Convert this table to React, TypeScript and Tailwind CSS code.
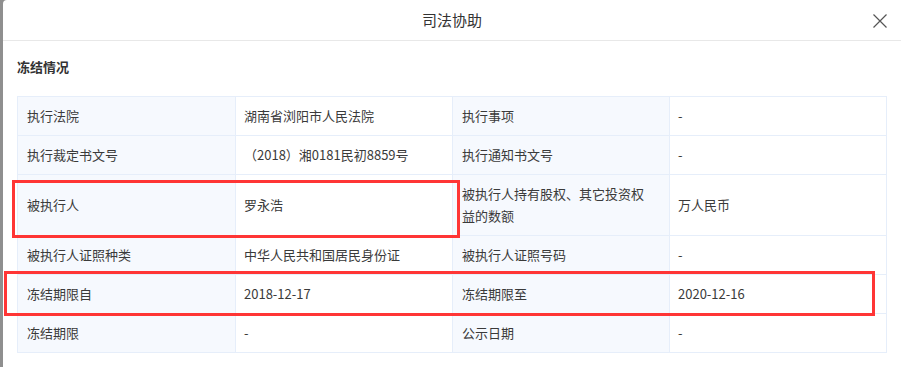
type Cell = { label: string; value: string };
type Row = [Cell, Cell];

const rows: Row[] = [
  [
    { label: '执行法院', value: '湖南省浏阳市人民法院' },
    { label: '执行事项', value: '-' },
  ],
  [
    { label: '执行裁定书文号', value: '（2018）湘0181民初8859号' },
    { label: '执行通知书文号', value: '-' },
  ],
  [
    { label: '被执行人', value: '罗永浩' },
    { label: '被执行人持有股权、其它投资权益的数额', value: '万人民币' },
  ],
  [
    { label: '被执行人证照种类', value: '中华人民共和国居民身份证' },
    { label: '被执行人证照号码', value: '-' },
  ],
  [
    { label: '冻结期限自', value: '2018-12-17' },
    { label: '冻结期限至', value: '2020-12-16' },
  ],
  [
    { label: '冻结期限', value: '-' },
    { label: '公示日期', value: '-' },
  ],
];

const CloseIcon = () => (
  <svg className="absolute left-[870px] top-[14px]" width="14" height="14" viewBox="0 0 14 14">
    <path d="M0.5 0.5 L13.5 13.5 M13.5 0.5 L0.5 13.5" stroke="#555" strokeWidth="1.2" fill="none" />
  </svg>
);

const App = () => {
  return (
    <div
      className="relative w-[901px] h-[367px] overflow-hidden bg-[#8f8f8f]"
      style={{ fontFamily: '"Microsoft YaHei", "Noto Sans CJK SC", "Noto Sans", sans-serif' }}
    >
      <div className="ml-[3px] h-full bg-white rounded-tl-[4px] flex flex-col">
        {/* header */}
        <div className="relative h-[41px] shrink-0 border-b border-[#e8e8e8] flex items-center justify-center">
          <span className="text-[15px] text-[#333]">司法协助</span>
          <CloseIcon />
        </div>

        {/* body */}
        <div className="pl-[14px] pr-[12px]">
          <div className="pt-[16px] pb-[19px] text-[13px] font-bold text-[#333] leading-[20px]">冻结情况</div>

          <table className="w-[869px] border-collapse text-[13px] text-[#3a3a3a] table-fixed">
            <colgroup>
              <col className="w-[218px]" />
              <col className="w-[217px]" />
              <col className="w-[217px]" />
              <col className="w-[217px]" />
            </colgroup>
            <tbody>
              {rows.map((row, i) => (
                <tr key={i}>
                  {row.map((c, j) => (
                    <>
                      <td
                        key={`l${j}`}
                        className="border border-[#e6eefa] bg-[#f6f9fe] pl-[9px] pr-[16px] py-[8px] leading-[22px] align-middle"
                      >
                        {c.label}
                      </td>
                      <td
                        key={`v${j}`}
                        className="border border-[#e6eefa] bg-white pl-[8px] pr-[8px] py-[8px] leading-[22px] align-middle"
                      >
                        {c.value}
                      </td>
                    </>
                  ))}
                </tr>
              ))}
            </tbody>
          </table>
        </div>
      </div>

      {/* annotation boxes */}
      <div className="absolute left-[12px] top-[180px] w-[448px] h-[58px] border-[3px] border-[#ff3535]" />
      <div className="absolute left-[4px] top-[271px] w-[871px] h-[45px] border-[3px] border-[#ff3535]" />
    </div>
  );
};

export default App;
